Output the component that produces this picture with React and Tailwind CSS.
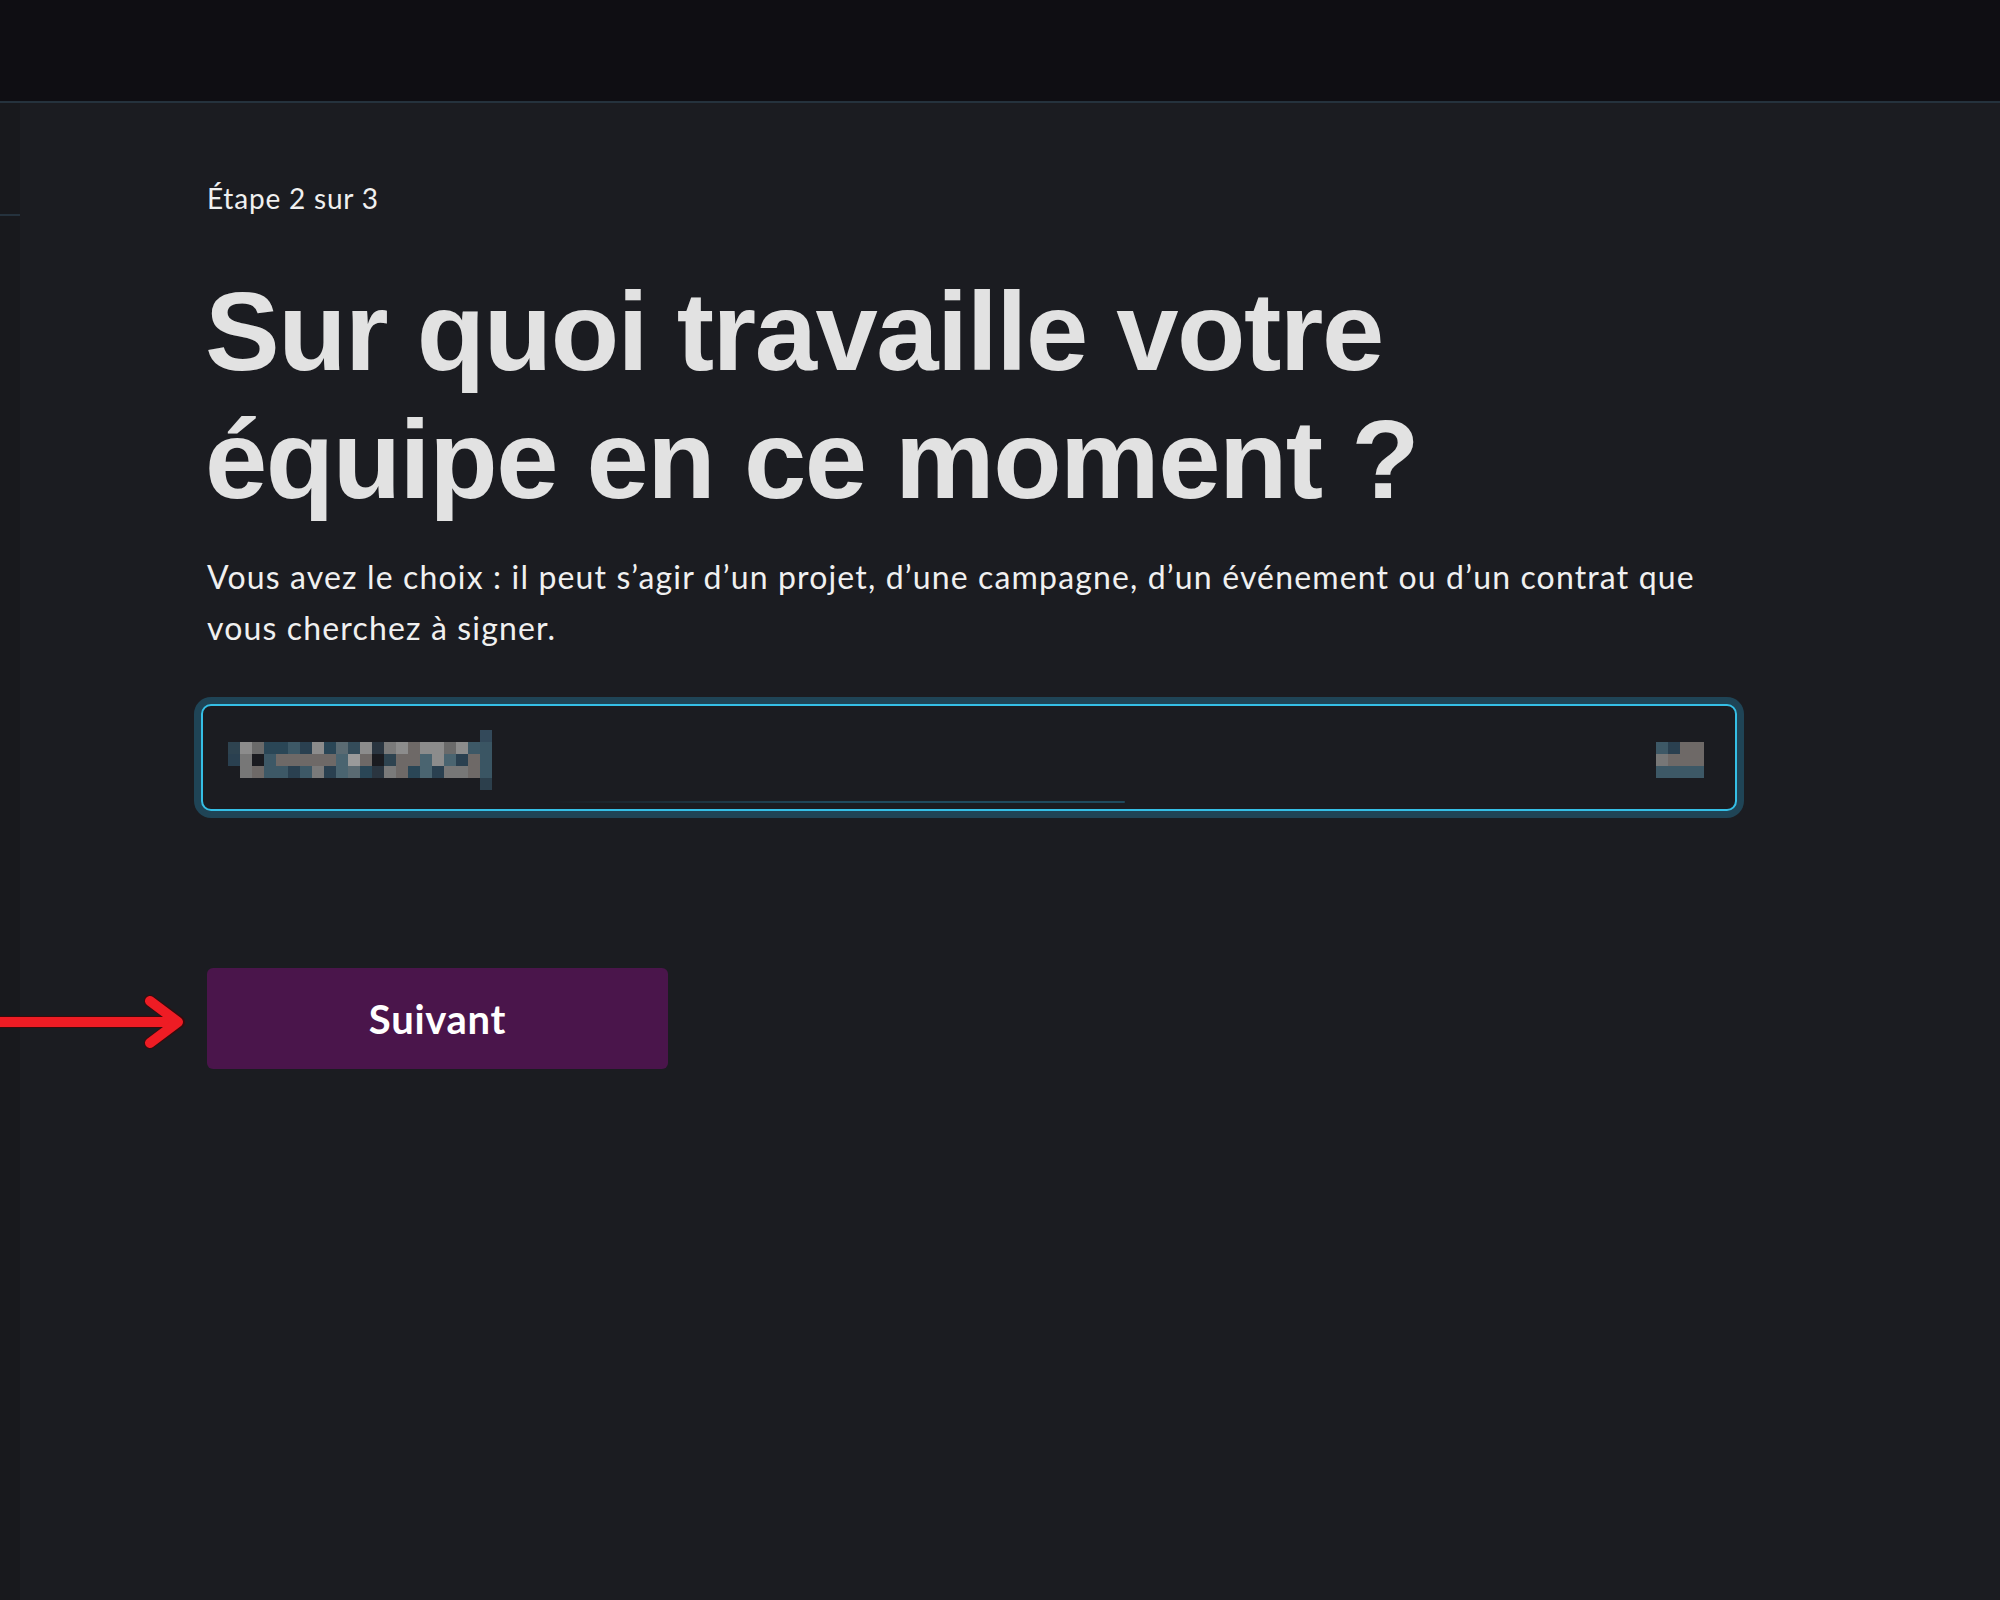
import React from "react";

const C = {
  a: "#2e4350",
  g: "#8c8c8c",
  m: "#6a6a6a",
  t: "#2a4656",
  d: "#3d5866",
  k: "#2a4050",
  b: "#6e6967",
  n: "#1a1b20",
  x: "#5a6a72",
  y: "#777777",
  z: "#4a6470",
  w: "#9a9a9a",
  e: "#2a3540",
  f: "#7a7a7a",
  c: "#344c5a",
  _: null,
};

const rows = [
  "agmttdkgtxcgefgbggmgd",
  "kyndbbbbbzwbnabbzgzkb",
  "_ybddkdfkzxtefbtzkyyb",
];

const rightRows = ["dkbb", "ybbb", "dddd"];

function Mosaic() {
  const rects = [];
  rows.forEach((r, ri) => {
    r.split("").forEach((ch, ci) => {
      const col = C[ch];
      if (!col) return;
      rects.push(
        <rect key={`${ri}-${ci}`} x={ci * 12} y={12 + ri * 12} width="12" height="12" fill={col} />
      );
    });
  });
  return (
    <svg width="264" height="60" viewBox="0 0 264 60" className="block">
      {rects}
      <rect x="252" y="0" width="12" height="12" fill="#33495a" />
      <rect x="252" y="12" width="12" height="36" fill="#3a5563" />
      <rect x="252" y="48" width="12" height="12" fill="#2c3f4c" />
    </svg>
  );
}

function RightMosaic() {
  const rects = [];
  rightRows.forEach((r, ri) => {
    r.split("").forEach((ch, ci) => {
      rects.push(
        <rect key={`${ri}-${ci}`} x={ci * 12} y={ri * 12} width="12" height="12" fill={C[ch]} />
      );
    });
  });
  return (
    <svg width="48" height="36" viewBox="0 0 48 36" className="block">
      {rects}
    </svg>
  );
}

export default function App() {
  return (
    <div className="w-[2000px] h-[1600px] bg-[#1b1c21] flex flex-col overflow-hidden relative font-['Lato',sans-serif]">
      <div className="h-[103px] shrink-0 bg-[#0f0e13] border-b-2 border-[#25323d]" />
      <div className="flex flex-1">
        <div className="w-[20px] shrink-0 bg-[#18191d] flex flex-col">
          <div className="h-[111px]" />
          <div className="h-[2px] bg-[#25323d]" />
        </div>
        <main className="flex-1 pl-[187px] pt-[78px]">
          <div className="w-[1530px] flex flex-col">
            <p className="text-[28px] leading-[34px] tracking-[0.8px] text-[#f0f0f0]">Étape 2 sur 3</p>
            <h1 className="mt-[53px] -ml-[2px] font-['Liberation_Sans',Arial,sans-serif] font-bold text-[112px] leading-[128px] tracking-[-1.5px] text-[#e2e2e2]">
              Sur quoi travaille votre
              <br />
              équipe en ce moment&nbsp;?
            </h1>
            <p className="mt-[27px] text-[32px] leading-[51px] tracking-[1.15px] text-[#f0f0f0] whitespace-nowrap">
              Vous avez le choix : il peut s’agir d’un projet, d’une campagne, d’un événement ou d’un contrat que
              <br />
              vous cherchez à signer.
            </p>
            <div className="mt-[51px] -ml-[6px] w-[1536px] h-[107px] relative rounded-[10px] border-2 border-[#35bfe6] shadow-[0_0_0_7px_#1f4456] bg-[#1b1c21] flex items-center justify-between pl-[25px] pr-[31px] pt-[5px]">
              <Mosaic />
              <RightMosaic />
              <div className="absolute left-[346px] bottom-[6px] w-[576px] h-[2px] rounded-full bg-gradient-to-r from-transparent via-[#1f4a5e] to-[#1f4a5e]" />
            </div>
            <button className="mt-[157px] w-[461px] h-[101px] rounded-[6px] bg-[#4a154b] text-white font-bold text-[40px] tracking-[0.7px] flex items-center justify-center">
              Suivant
            </button>
          </div>
        </main>
      </div>
      <svg className="absolute left-0 top-[994px]" width="190" height="56" viewBox="0 0 190 56">
        <g fill="none" strokeLinecap="round" strokeLinejoin="round">
          <path d="M-10 28 H178" stroke="#3a0a0c" strokeWidth="12" />
          <path d="M150 7 L179 28 L150 49" stroke="#3a0a0c" strokeWidth="12" />
          <path d="M-10 28 H177" stroke="#ee1c24" strokeWidth="10" />
          <path d="M150 7 L178 28 L150 49" stroke="#ee1c24" strokeWidth="10" />
        </g>
      </svg>
    </div>
  );
}
